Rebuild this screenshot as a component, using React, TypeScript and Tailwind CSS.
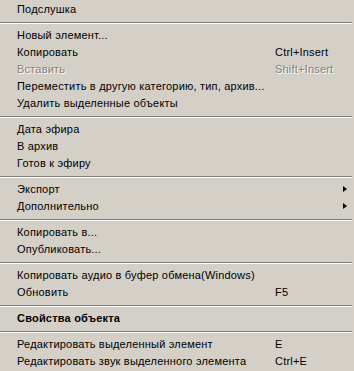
import React from "react";

type Item =
  | { sep: true }
  | {
      sep?: false;
      label: string;
      shortcut?: string;
      disabled?: boolean;
      bold?: boolean;
      sub?: boolean;
    };

const items: Item[] = [
  { label: "Подслушка" },
  { sep: true },
  { label: "Новый элемент..." },
  { label: "Копировать", shortcut: "Ctrl+Insert" },
  { label: "Вставить", shortcut: "Shift+Insert", disabled: true },
  { label: "Переместить в другую категорию, тип, архив..." },
  { label: "Удалить выделенные объекты" },
  { sep: true },
  { label: "Дата эфира" },
  { label: "В архив" },
  { label: "Готов к эфиру" },
  { sep: true },
  { label: "Экспорт", sub: true },
  { label: "Дополнительно", sub: true },
  { sep: true },
  { label: "Копировать в..." },
  { label: "Опубликовать..." },
  { sep: true },
  { label: "Копировать аудио в буфер обмена(Windows)" },
  { label: "Обновить", shortcut: "F5" },
  { sep: true },
  { label: "Свойства объекта", bold: true },
  { sep: true },
  { label: "Редактировать выделенный элемент", shortcut: "E" },
  { label: "Редактировать звук выделенного элемента", shortcut: "Ctrl+E" },
];

const disabledText = "text-[#808080] [text-shadow:1px_1px_0_#ffffff]";

export default function App() {
  return (
    <div className="w-[354px] h-[371px] bg-[#d4d0c8] pt-px text-[11px] leading-[17px] tracking-[0.2px] text-black font-['Liberation_Sans',Tahoma,sans-serif] overflow-hidden">
      {items.map((it, i) =>
        it.sep ? (
          <div key={i} className="h-[9px] flex flex-col pt-1 pr-[2px]">
            <div className="h-px bg-[#808080]" />
            <div className="h-px bg-white" />
          </div>
        ) : (
          <div key={i} className="h-[17px] flex items-center pl-[17px] relative">
            <span
              className={
                (it.disabled ? disabledText : "") +
                (it.bold ? " font-bold" : "") +
                " whitespace-nowrap w-[258px]"
              }
            >
              {it.label}
            </span>
            {it.shortcut && (
              <span className={(it.disabled ? disabledText : "") + " whitespace-nowrap"}>
                {it.shortcut}
              </span>
            )}
            {it.sub && (
              <span className="absolute left-[343px] top-[5px] w-0 h-0 border-y-[3.5px] border-y-transparent border-l-[4px] border-l-black" />
            )}
          </div>
        )
      )}
    </div>
  );
}
